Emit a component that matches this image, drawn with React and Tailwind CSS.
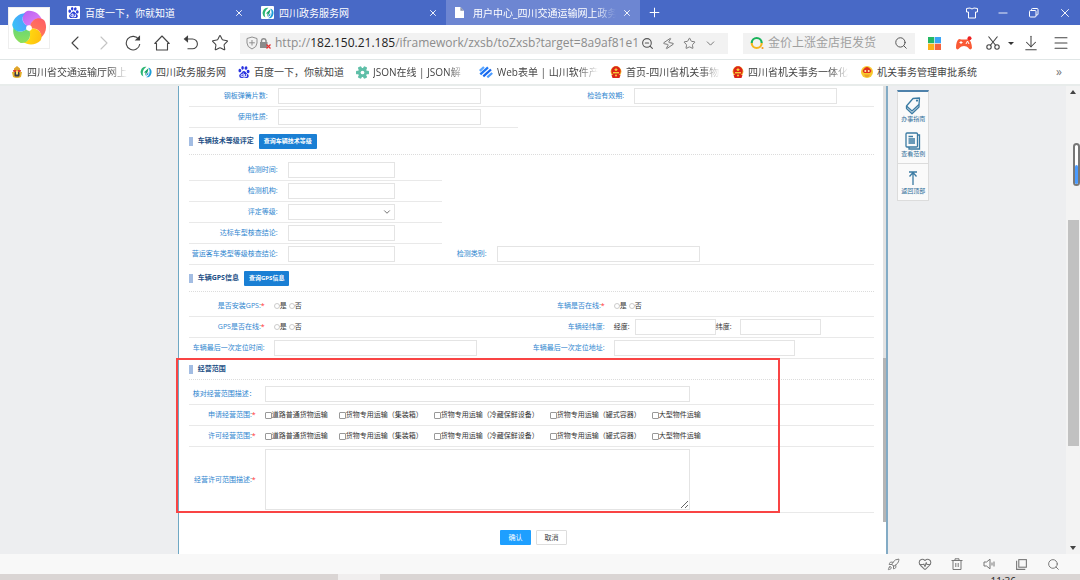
import React from "react";
import {
  ChevronLeft, ChevronRight, ChevronDown, Star, Search, ZoomOut, Zap, Menu,
  ArrowDownToLine, X, Plus, Minus, Rocket, HeartPulse,
} from "lucide-react";
import { SiBaidu } from "react-icons/si";

/* ---------- drawings ---------- */

function PinwheelLogo() {
  const petals = [
    ["#b455f2", "#e07df5", 0],
    ["#ff4f5e", "#ff7a4a", 72],
    ["#ffb400", "#ffe600", 144],
    ["#8fe04a", "#4ed07a", 216],
    ["#28c4f5", "#4a8bff", 288],
  ];
  return (
    <svg viewBox="-18 -18 36 36" className="size-9" aria-hidden="true">
      <defs>
        {petals.map(([a, b], i) => (
          <linearGradient key={i} id={"petal" + i} x1="0" y1="0" x2="1" y2="1">
            <stop offset="0" stopColor={a} />
            <stop offset="1" stopColor={b} />
          </linearGradient>
        ))}
      </defs>
      {petals.map(([, , r], i) => (
        <path
          key={i}
          d="M-2 -2 C-8 -6 -8 -14 -2 -17 C5 -18 11 -14 13 -8 C9 -11 3 -9 1.500 -2.500 Z"
          fill={"url(#petal" + i + ")"}
          opacity="0.94"
          transform={"rotate(" + r + ")"}
        />
      ))}
      <circle r="2.800" fill="#fff" />
    </svg>
  );
}

function GovLogo({ className }) {
  return (
    <svg viewBox="0 0 12 12" className={className} aria-hidden="true">
      <path d="M6.500 .800 A5.200 5.200 0 0 0 3.500 10.600 C2 7.500 2.600 3.500 6.500 .800Z" fill="#2bb673" />
      <path d="M8.500 1.400 A5.200 5.200 0 0 1 6 11.300 C10 9.500 10.400 4.500 8.500 1.400Z" fill="#1c9dd8" />
      <path d="M3.800 6.500 L8.600 2 L7.600 6 L5 9.500 L5.600 6.500 Z" fill="#1aa36a" />
      <path d="M5.500 10 L8.300 6 L8.300 8.500Z" fill="#2a7fd0" />
    </svg>
  );
}

function TransportBadge({ className }) {
  return (
    <svg viewBox="0 0 12 12" className={className} aria-hidden="true">
      <path d="M6 0 L9 2.500 L9 4 L3 4 L3 2.500Z" fill="#e0a52a" />
      <path d="M2 4 H10 L9.500 6 H2.500Z" fill="#d8402a" />
      <path d="M1 6 H11 L10 11 Q6 13 2 11Z" fill="#e3b02c" />
      <rect x="3.500" y="6" width="5" height="4.500" rx="1" fill="#3b3a4a" />
      <rect x="5" y="4.500" width="2" height="4" fill="#f7dc6a" />
    </svg>
  );
}

function Emblem({ className }) {
  return (
    <svg viewBox="0 0 12 12" className={className} aria-hidden="true">
      <circle cx="6" cy="5.500" r="5.400" fill="#f2b82e" />
      <circle cx="6" cy="5" r="4.700" fill="#dc2318" />
      <path d="M6 1.500 L6.600 3 H8 L6.900 4 L7.300 5.300 L6 4.500 L4.700 5.300 L5.100 4 L4 3 H5.400Z" fill="#f7d13c" />
      <rect x="3" y="6" width="6" height="1.400" fill="#f5c93a" />
      <path d="M1.500 9 H10.500 L9.500 12 H2.500Z" fill="#dc2318" />
      <circle cx="6" cy="9.500" r="1.100" fill="#f2c03a" />
    </svg>
  );
}

function GoldEmblem({ className }) {
  return (
    <svg viewBox="0 0 12 12" className={className} aria-hidden="true">
      <circle cx="6" cy="6" r="6" fill="#f8c92c" />
      <path d="M1.500 5 Q6 -3 10.500 5 L9 7 H3Z" fill="#e0301e" />
      <circle cx="4.300" cy="5" r="1" fill="#fff1b0" />
      <circle cx="7.700" cy="5" r="1" fill="#fff1b0" />
      <path d="M3 8.500 H9 L7.500 11 H4.500Z" fill="#eda02a" />
    </svg>
  );
}

function JsonGear({ className }) {
  return (
    <svg viewBox="0 0 12 12" className={className} aria-hidden="true">
      <g fill="#5fbfa8">
        <circle cx="6" cy="6" r="4.200" />
        {[0, 60, 120, 180, 240, 300].map((a) => (
          <rect key={a} x="4.300" y="0" width="3.400" height="4" rx=".800" transform={"rotate(" + (a + 30) + " 6 6)"} />
        ))}
      </g>
      <circle cx="6" cy="6" r="1.700" fill="#fff" />
    </svg>
  );
}

function StripesLogo({ className }) {
  return (
    <svg viewBox="0 0 14 12" className={className} aria-hidden="true" fill="none" strokeWidth="2.300">
      <path d="M.800 4.800 L5 1" stroke="#5aa6ff" />
      <path d="M1.300 8.300 L9 1.300" stroke="#1f78f5" />
      <path d="M4.300 10.300 L12 3.500" stroke="#1667ee" />
      <path d="M8.300 11.300 L13.200 7" stroke="#4a9bff" />
    </svg>
  );
}

function PageIcon() {
  return (
    <svg viewBox="0 0 10 12" className="h-[11px] w-[9px]" aria-hidden="true">
      <path d="M0 0 H6 L10 4 V12 H0Z" fill="#fff" />
      <path d="M6 0 V4 H10Z" fill="#8a93ad" />
    </svg>
  );
}

function ReloadIcon() {
  return (
    <svg viewBox="0 0 16 16" className="size-4" fill="none" stroke="#444" strokeWidth="1.100" aria-hidden="true">
      <path d="M13.800 4.500 A6.800 6.800 0 1 0 14.800 9" />
      <path d="M11 5 H14.500 V1.500Z" fill="#333" />
    </svg>
  );
}

function HomeIcon() {
  return (
    <svg viewBox="0 0 16 16" className="size-4" fill="none" stroke="#444" strokeWidth="1.100" strokeLinejoin="round" aria-hidden="true">
      <path d="M.800 8.500 L8 1 L15.200 8.500 H13.500 V15 H2.500 V8.500 Z" />
    </svg>
  );
}

function UndoIcon() {
  return (
    <svg viewBox="0 0 16 16" className="size-4" fill="none" stroke="#444" strokeWidth="1.100" aria-hidden="true">
      <path d="M2 4 H9.500 A4.900 4.900 0 0 1 9.500 13.800 H4.500" />
      <path d="M4.500 1.500 L1.500 4 L4.500 6.500Z" fill="#333" />
    </svg>
  );
}

function ScissorsIcon() {
  return (
    <svg viewBox="0 0 14 14" className="size-[14px]" fill="none" stroke="#444" strokeWidth="1.100" aria-hidden="true">
      <path d="M2.500 .500 L9.800 9.500 M11.500 .500 L4.200 9.500" />
      <circle cx="3" cy="11" r="2.200" />
      <circle cx="11" cy="11" r="2.200" />
    </svg>
  );
}

function ShirtIcon() {
  return (
    <svg viewBox="0 0 12 12" className="size-3" fill="none" stroke="#fff" strokeLinejoin="round" aria-hidden="true">
      <path d="M4 1 Q6 3 8 1 L11.500 1.500 V5 H9.500 V11 H2.500 V5 H.500 V1.500Z" />
    </svg>
  );
}

function ShieldLock() {
  return (
    <svg viewBox="0 0 26 14" className="h-[14px] w-[26px] shrink-0" fill="none" aria-hidden="true">
      <path d="M6 1 L11 2.500 V7 Q11 11 6 13 Q1 11 1 7 V2.500Z" stroke="#8f8f8f" />
      <path d="M6 4 V9.500 M3.200 6.800 H8.800" stroke="#8f8f8f" />
      <rect x="14" y="6" width="7.500" height="6" fill="#8a8a8a" />
      <path d="M15.500 6 V4.500 A2.300 2.300 0 0 1 20 4.500 V6" stroke="#8a8a8a" strokeWidth="1.400" />
      <path d="M20.500 8.500 L24.500 12.500 M24.500 8.500 L20.500 12.500" stroke="#e83030" strokeWidth="1.200" />
    </svg>
  );
}

function SearchEngineLogo() {
  return (
    <svg viewBox="0 0 14 14" className="size-[14px] shrink-0" fill="none" strokeWidth="2.200" aria-hidden="true">
      <path d="M1.700 7 A5 5 0 0 1 11.700 7" stroke="#19b35a" />
      <path d="M11.700 7 A5 5 0 0 1 1.700 7" stroke="#f5b61e" />
      <circle cx="12.500" cy="12" r="1.100" fill="#f59a1e" />
    </svg>
  );
}

function AppsIcon() {
  return (
    <svg viewBox="0 0 13 13" className="size-[13px]" aria-hidden="true">
      <rect width="6.200" height="6.200" fill="#25b864" />
      <rect x="6.800" width="6.200" height="6.200" fill="#3aa5f5" />
      <rect y="6.800" width="6.200" height="6.200" fill="#fbb117" />
      <rect x="6.800" y="6.800" width="6.200" height="6.200" fill="#f5633c" />
    </svg>
  );
}

function GamepadIcon() {
  return (
    <svg viewBox="0 0 18 15" className="h-[15px] w-[18px]" aria-hidden="true">
      <path d="M4 3 Q9 4 13.500 3 Q16.500 5 17 12 Q15.500 15 13 11.500 Q12 10 9 10 Q6 10 5 11.500 Q2 15 1 12 Q1 5 4 3Z" fill="#fa5a35" />
      <path d="M6 5 V8 M4.500 6.500 H7.500" stroke="#fff" />
      <path d="M11 8 L12.500 5 L14 8" stroke="#fff" fill="none" />
      <circle cx="14.500" cy="2.200" r="2" fill="#ee2222" />
    </svg>
  );
}

function WindowsIcon({ className }) {
  return (
    <svg viewBox="0 0 12 12" className={className} fill="none" stroke="currentColor" aria-hidden="true">
      <rect x="3.500" y="1.500" width="7" height="7" />
      <path d="M1.500 2.500 V10.500 H9.500" />
    </svg>
  );
}

function TrashIcon() {
  return (
    <svg viewBox="0 0 12 13" className="h-[13px] w-3" fill="none" stroke="currentColor" aria-hidden="true">
      <path d="M.500 2.500 H11.500 M4 2.500 V.800 H8 V2.500 M2 2.500 V11.500 H10 V2.500 M4.800 5 V9 M7.200 5 V9" />
    </svg>
  );
}

function SpeakerIcon() {
  return (
    <svg viewBox="0 0 12 12" className="size-3" fill="none" stroke="currentColor" strokeLinejoin="round" aria-hidden="true">
      <path d="M1 4 H3.500 L7 1.200 V10.800 L3.500 8 H1Z M9 4.500 V7.500 M11 3.500 V8.500" />
    </svg>
  );
}

function RestoreIcon() {
  return (
    <svg viewBox="0 0 10 10" className="size-[10px]" fill="none" stroke="#fff" aria-hidden="true">
      <rect x=".500" y="2.500" width="6.500" height="6.500" rx="1" />
      <path d="M2.500 2.500 V1.500 Q2.500 .500 3.500 .500 H8 Q9 .500 9 1.500 V6 Q9 7 8 7 H7" />
    </svg>
  );
}

function GuideIcon() {
  return (
    <svg viewBox="0 0 16 18" className="h-[18px] w-4" fill="none" stroke="#3b7ba3" strokeWidth="1.300" strokeLinejoin="round" aria-hidden="true">
      <path d="M8 1.500 L14.500 1 L14 7.500 L7 14 L1.500 9 Z" />
      <path d="M1.500 9 V11.500 L7 16.800 L14 10 V7.500" />
      <circle cx="12" cy="3.600" r=".500" />
    </svg>
  );
}

function SampleIcon() {
  return (
    <svg viewBox="0 0 16 18" className="h-[18px] w-4" fill="none" stroke="#3b7ba3" strokeWidth="1.300" aria-hidden="true">
      <rect x="1" y="1" width="11.500" height="14" rx="1" />
      <path d="M3.500 4.500 H8 M3.500 7 H10 M3.500 9 H10 M3.500 11 H10 M12.500 3 H14.500 V17 H4 V15" />
    </svg>
  );
}

function TopIcon() {
  return (
    <svg viewBox="0 0 16 18" className="h-[18px] w-4" fill="none" stroke="#3b7ba3" strokeWidth="1.300" aria-hidden="true">
      <path d="M4 3 H12 M8 3.500 V16 M4.500 7.500 L8 3.500 L11.500 7.500" />
    </svg>
  );
}

/* ---------- browser chrome ---------- */

function Tab({ icon, title, active }) {
  return (
    <div className={"flex w-[194px] items-center pl-[9px] pr-2 " + (active ? "bg-[#6d86d2]" : "")}>
      <span className="flex w-[18px] shrink-0">{icon}</span>
      <span className="min-w-0 flex-1 overflow-hidden whitespace-nowrap text-[10px] leading-4 text-white">
        <span className={"block overflow-hidden " + (active ? "[mask-image:linear-gradient(to_right,#000_85%,transparent)]" : "")}>{title}</span>
      </span>
      <button type="button" aria-label="关闭标签页" className="flex w-4 justify-end text-white">
        <X className="size-[10px]" strokeWidth={2.2} />
      </button>
    </div>
  );
}

function TitleBar() {
  return (
    <header className="flex h-[25px] shrink-0 bg-[#4869c6] pl-[58px]">
      <Tab
        icon={<span className="flex size-[13px] items-center justify-center rounded-[1px] bg-white"><SiBaidu className="size-[11px] text-[#2a3fd8]" /></span>}
        title="百度一下，你就知道"
      />
      <Tab
        icon={<span className="flex size-[13px] items-center justify-center rounded-[1px] bg-white"><GovLogo className="size-3" /></span>}
        title="四川政务服务网"
      />
      <Tab active icon={<PageIcon />} title="用户中心_四川交通运输网上政务" />
      <button type="button" aria-label="新标签页" className="flex w-[28px] items-center justify-center text-white">
        <Plus className="size-[15px]" strokeWidth={1.6} />
      </button>
      <div className="ml-auto flex text-white">
        <button type="button" aria-label="皮肤" className="flex w-[31px] items-center justify-center"><ShirtIcon /></button>
        <button type="button" aria-label="最小化" className="flex w-[31px] items-center justify-center"><Minus className="size-[14px]" strokeWidth={1.5} /></button>
        <button type="button" aria-label="还原" className="flex w-[31px] items-center justify-center"><RestoreIcon /></button>
        <button type="button" aria-label="关闭" className="flex w-[31px] items-center justify-center"><X className="size-[14px]" strokeWidth={1.6} /></button>
      </div>
    </header>
  );
}

function NavButton({ label, children }) {
  return (
    <button type="button" aria-label={label} className="flex w-[29px] items-center justify-center text-[#444]">
      {children}
    </button>
  );
}

function Toolbar() {
  return (
    <div className="flex h-[35px] shrink-0 items-center border-b border-[#e0e6e6] bg-white pl-[60px] pr-[6px] pt-[2px]">
      <NavButton label="后退"><ChevronLeft className="size-6" strokeWidth={1.1} /></NavButton>
      <NavButton label="前进"><ChevronRight className="size-6 text-[#c4c4c4]" strokeWidth={1.1} /></NavButton>
      <NavButton label="刷新"><ReloadIcon /></NavButton>
      <NavButton label="主页"><HomeIcon /></NavButton>
      <NavButton label="恢复"><UndoIcon /></NavButton>
      <NavButton label="收藏"><Star className="size-[18px]" strokeWidth={1.4} /></NavButton>
      <div className="ml-[6px] flex h-[21px] min-w-0 flex-1 items-center bg-[#f2f2f2] pl-[6px] pr-[11px]">
        <ShieldLock />
        <p className="ml-[3px] min-w-0 flex-1 overflow-hidden whitespace-nowrap text-[12px] leading-5 text-[#8c8c8c]">
          http://<span className="text-[#222]">182.150.21.185</span>/iframework/zxsb/toZxsb?target=8a9af81e1
        </p>
        <div className="flex shrink-0 items-center gap-2 text-[#777]">
          <ZoomOut className="size-[13px] text-[#555]" strokeWidth={2} />
          <Zap className="size-[13px] rotate-12" strokeWidth={1.7} />
          <Star className="size-[13px]" strokeWidth={1.8} />
          <ChevronDown className="size-[13px]" strokeWidth={1.8} />
        </div>
      </div>
      <div className="ml-[15px] flex h-[21px] w-[172px] items-center bg-[#f2f2f2] px-[7px]">
        <SearchEngineLogo />
        <input aria-label="搜索" placeholder="金价上涨金店拒发货" className="ml-1 min-w-0 flex-1 bg-transparent text-[12px] leading-5 outline-none placeholder:text-[#a0a0a0]" />
        <button type="button" aria-label="搜索按钮"><Search className="size-[14px] text-[#555]" strokeWidth={1.7} /></button>
      </div>
      <div className="ml-1 flex items-center text-[#444]">
        <button type="button" aria-label="应用" className="flex w-[30px] justify-center"><AppsIcon /></button>
        <button type="button" aria-label="游戏" className="flex w-[30px] justify-center"><GamepadIcon /></button>
        <button type="button" aria-label="截图" className="flex w-[28px] justify-center"><ScissorsIcon /></button>
        <button type="button" aria-label="截图选项" className="flex w-2 justify-center">
          <span className="border-x-[3px] border-t-[3px] border-x-transparent border-t-[#333]" />
        </button>
        <button type="button" aria-label="下载" className="flex w-[32px] justify-center"><ArrowDownToLine className="size-[18px]" strokeWidth={1.4} /></button>
        <button type="button" aria-label="菜单" className="flex w-[27px] justify-center"><Menu className="size-[18px]" strokeWidth={1.4} /></button>
      </div>
    </div>
  );
}

const FADE = "[mask-image:linear-gradient(to_right,#000_80%,transparent)] ";
const bookmarks = [
  { text: "四川省交通运输厅网上", icon: <TransportBadge className="size-3" />, cls: FADE + "w-[101px]" },
  { text: "四川政务服务网", icon: <GovLogo className="size-3" />, cls: "" },
  { text: "百度一下，你就知道", icon: <SiBaidu className="size-3 text-[#2a34e0]" />, cls: "" },
  { text: "JSON在线 | JSON解", icon: <JsonGear className="size-[13px]" />, cls: FADE + "w-[94px]" },
  { text: "Web表单 | 山川软件产", icon: <StripesLogo className="h-3 w-[14px]" />, cls: FADE + "w-[101px]" },
  { text: "首页-四川省机关事物", icon: <Emblem className="size-3" />, cls: FADE + "w-[94px]" },
  { text: "四川省机关事务一体化", icon: <Emblem className="size-3" />, cls: FADE + "w-[101px]" },
  { text: "机关事务管理审批系统", icon: <GoldEmblem className="size-3" />, cls: "" },
];

function BookmarkBar() {
  return (
    <nav className="flex h-[26px] shrink-0 items-center gap-3 border-b-2 border-[#e8eceb] bg-white pl-[11px] pr-[18px]">
      {bookmarks.map((b) => (
        <a key={b.text} href="#" className="flex shrink-0 items-center gap-1 text-[10px] leading-4 text-[#444]">
          {b.icon}
          <span className={"overflow-hidden whitespace-nowrap " + b.cls}>{b.text}</span>
        </a>
      ))}
      <button type="button" aria-label="更多书签" className="ml-auto text-[12px] leading-4 text-[#777]">»</button>
    </nav>
  );
}

/* ---------- form ---------- */

const BOX = "h-4 border border-[#e4e4e4] bg-white px-1 text-[7px] outline-none ";

function Label({ htmlFor, className, required, children }) {
  return (
    <label htmlFor={htmlFor} className={"shrink-0 whitespace-nowrap text-right text-[#2f86cf] " + className}>
      {children}
      {required && <span className="text-[#f33]">*</span>}
    </label>
  );
}

function Row({ className = "", children }) {
  return <div className={"flex h-[21px] items-center border-b border-[#e9e9e9] " + className}>{children}</div>;
}

function SectionHead({ title, button, className }) {
  return (
    <div className={"flex items-center border-b border-dotted border-[#dcdcdc] " + className}>
      <span className="mr-[5px] h-[9px] w-1 bg-[#a3bde3]" />
      <h2 className="font-bold text-[#1d4f86]">{title}</h2>
      {button && (
        <button type="button" className="ml-[5px] h-[15px] rounded-[1px] bg-[#1a7fd4] px-[5px] text-[6px] font-bold leading-[15px] text-white">
          {button}
        </button>
      )}
    </div>
  );
}

function YesNo({ name }) {
  return (
    <div className="flex items-center gap-[2px] text-[#333]">
      {["是", "否"].map((t) => (
        <label key={t} className="flex items-center">
          <input type="radio" name={name} className="size-[6px] appearance-none rounded-full border border-[#ccc] bg-white" />
          {t}
        </label>
      ))}
    </div>
  );
}

const scopes = ["道路普通货物运输", "货物专用运输（集装箱）", "货物专用运输（冷藏保鲜设备）", "货物专用运输（罐式容器）", "大型物件运输"];

function ScopeRow({ title }) {
  return (
    <Row className="gap-[9px]">
      <span className="w-[67px] shrink-0 whitespace-nowrap text-right text-[#2f86cf]">{title}:<span className="text-[#f33]">*</span></span>
      <div className="flex gap-[11px] text-[#333]">
        {scopes.map((s) => (
          <label key={s} className="flex items-center whitespace-nowrap">
            <input type="checkbox" className="size-[7px] appearance-none rounded-[1px] border border-[#999] bg-white" />
            {s}
          </label>
        ))}
      </div>
    </Row>
  );
}

function VehicleForm() {
  return (
    <form className="min-w-0 flex-1 bg-white pl-[10px] pr-[9px] text-[7px] leading-[10px]" onSubmit={(e) => e.preventDefault()}>
      <Row>
        <div className="flex w-[52%] items-center gap-[10px]">
          <Label htmlFor="leaf" className="w-[79px]">钢板弹簧片数:</Label>
          <input id="leaf" className={BOX + "w-[203px]"} />
        </div>
        <div className="flex items-center gap-[10px]">
          <Label htmlFor="valid" className="w-[79px]">检验有效期:</Label>
          <input id="valid" className={BOX + "w-[203px]"} />
        </div>
      </Row>
      <Row className="w-[48%] gap-[10px]">
        <Label htmlFor="usage" className="w-[79px]">使用性质:</Label>
        <input id="usage" className={BOX + "w-[203px]"} />
      </Row>

      <SectionHead title="车辆技术等级评定" button="查询车辆技术等级" className="mb-[5px] h-[27px]" />
      <Row className="w-[37%] gap-[10px]">
        <Label htmlFor="ctime" className="w-[89px]">检测时间:</Label>
        <input id="ctime" className={BOX + "w-[107px]"} />
      </Row>
      <Row className="w-[37%] gap-[10px]">
        <Label htmlFor="corg" className="w-[89px]">检测机构:</Label>
        <input id="corg" className={BOX + "w-[107px]"} />
      </Row>
      <Row className="w-[37%] gap-[10px]">
        <Label htmlFor="grade" className="w-[89px]">评定等级:</Label>
        <div className="grid w-[107px] items-center">
          <select id="grade" className={BOX + "col-start-1 row-start-1 w-full appearance-none"}><option value=""></option></select>
          <ChevronDown className="pointer-events-none col-start-1 row-start-1 mr-[3px] size-[10px] justify-self-end text-[#555]" />
        </div>
      </Row>
      <Row className="w-[37%] gap-[10px]">
        <Label htmlFor="std" className="w-[89px]">达标车型核查结论:</Label>
        <input id="std" className={BOX + "w-[107px]"} />
      </Row>
      <Row>
        <div className="flex w-[209px] items-center gap-[10px]">
          <Label htmlFor="bus" className="w-[89px]">营运客车类型等级核查结论:</Label>
          <input id="bus" className={BOX + "w-[107px]"} />
        </div>
        <div className="flex items-center gap-[10px]">
          <Label htmlFor="ctype" className="w-[89px]">检测类别:</Label>
          <input id="ctype" className={BOX + "w-[203px]"} />
        </div>
      </Row>

      <SectionHead title="车辆GPS信息" button="查询GPS信息" className="mb-1 h-[27px]" />
      <Row>
        <div className="flex w-[340px] items-center gap-[9px]">
          <span className="w-[76px] text-right text-[#2f86cf]">是否安装GPS:<span className="text-[#f33]">*</span></span>
          <YesNo name="gps" />
        </div>
        <div className="flex items-center gap-[9px]">
          <span className="w-[76px] text-right text-[#2f86cf]">车辆是否在线:<span className="text-[#f33]">*</span></span>
          <YesNo name="online" />
        </div>
      </Row>
      <Row>
        <div className="flex w-[340px] items-center gap-[9px]">
          <span className="w-[76px] text-right text-[#2f86cf]">GPS是否在线:<span className="text-[#f33]">*</span></span>
          <YesNo name="gpsonline" />
        </div>
        <div className="flex items-center gap-[9px]">
          <span className="w-[76px] text-right text-[#2f86cf]">车辆经纬度:</span>
          <div className="flex items-center text-[#333]">
            <label htmlFor="lng" className="w-[21px]">经度:</label>
            <input id="lng" className={BOX + "w-[81px]"} />
            <label htmlFor="lat" className="w-[24px]">纬度:</label>
            <input id="lat" className={BOX + "w-[81px]"} />
          </div>
        </div>
      </Row>
      <Row>
        <div className="flex w-[340px] items-center gap-[9px]">
          <Label htmlFor="ltime" className="w-[76px]">车辆最后一次定位时间:</Label>
          <input id="ltime" className={BOX + "w-[203px]"} />
        </div>
        <div className="flex items-center gap-[9px]">
          <Label htmlFor="laddr" className="w-[76px]">车辆最后一次定位地址:</Label>
          <input id="laddr" className={BOX + "w-[181px]"} />
        </div>
      </Row>

      <section className="relative">
        <SectionHead title="经营范围" className="mb-1 h-[21px]" />
        <Row className="gap-[9px]">
          <Label htmlFor="check" className="w-[67px]">核对经营范围描述：</Label>
          <input id="check" className={BOX + "w-[425px]"} />
        </Row>
        <ScopeRow title="申请经营范围" />
        <ScopeRow title="许可经营范围" />
        <div className="flex items-center gap-[9px] border-b border-[#e9e9e9] py-[2px]">
          <Label htmlFor="desc" required className="w-[67px]">经营许可范围描述:</Label>
          <textarea id="desc" className="h-[61px] w-[425px] resize border border-[#e4e4e4] bg-white outline-none" />
        </div>
        <div className="pointer-events-none absolute -left-[13px] -top-px bottom-0 w-[604px] border-2 border-[#f94444]" />
      </section>

      <div className="flex justify-center gap-[5px] py-[17px] pl-1">
        <button type="submit" className="h-[15px] w-[31px] rounded-[1px] bg-[#1e9fff] text-white">确认</button>
        <button type="button" className="h-[15px] w-[31px] rounded-[1px] border border-[#ddd] bg-white text-[#444]">取消</button>
      </div>
    </form>
  );
}

function SideTools() {
  const cls = "flex h-9 flex-col items-center justify-center text-[6px] leading-[9px] text-[#2f6d98]";
  return (
    <aside className="ml-[9px] mt-1 w-8 self-start border-x border-b border-t-2 border-[#dcdcdc] border-t-[#4f82ab] bg-[#fafafa]">
      <a href="#" className={cls}><GuideIcon /><span className="whitespace-nowrap">办事指南</span></a>
      <a href="#" className={cls + " border-b border-[#dcdcdc]"}><SampleIcon /><span className="whitespace-nowrap">查看范例</span></a>
      <a href="#" className={cls}><TopIcon /><span className="whitespace-nowrap">返回顶部</span></a>
    </aside>
  );
}

function PageScrollbar() {
  return (
    <div className="relative flex w-[14px] shrink-0 flex-col items-center bg-[#f3f3f3] py-1">
      <span className="border-x-[3px] border-b-[4px] border-x-transparent border-b-[#444]" />
      <span className="flex-[125]" />
      <span className="w-[11px] flex-[225] bg-[#c1c1c1]" />
      <span className="flex-[100]" />
      <span className="border-x-[3px] border-t-[4px] border-x-transparent border-t-[#444]" />
      <div className="absolute right-0 top-[57px] flex h-[43px] w-[7px] items-end rounded-full border-2 border-[#777] bg-white">
        <span className="h-1/2 w-full rounded-full bg-[#4a9bff]" />
      </div>
    </div>
  );
}

function StatusBar() {
  const icons = [
    ["加速", <Rocket className="size-[13px]" strokeWidth={1.8} />],
    ["医生", <HeartPulse className="size-[14px]" strokeWidth={1.8} />],
    ["清理", <TrashIcon />],
    ["静音", <SpeakerIcon />],
    ["分屏", <WindowsIcon className="size-[13px]" />],
    ["缩放", <Search className="size-[13px]" strokeWidth={1.8} />],
  ];
  return (
    <div className="flex h-5 shrink-0 items-center justify-end bg-[#f8f8f8] pr-[11px] text-[#777]">
      {icons.map(([label, icon]) => (
        <button key={label} type="button" aria-label={label} className="flex w-8 justify-center">{icon}</button>
      ))}
    </div>
  );
}

export default function App() {
  return (
    <div className="relative flex h-screen flex-col overflow-hidden bg-[#edeef0] font-['Open_Sans','Noto_Sans_CJK_SC',sans-serif]">
      <TitleBar />
      <Toolbar />
      <BookmarkBar />
      <div className="absolute left-2 top-[7px] flex size-[42px] items-center justify-center border border-[#eee] bg-white">
        <PinwheelLogo />
      </div>
      <main className="flex min-h-0 flex-1">
        <div className="grid min-w-0 flex-1 grid-cols-[1fr_4fr_1fr] overflow-hidden">
          <div />
          <div className="flex min-h-0 border-l border-r-2 border-l-[#6fa8c4] border-r-[#83abc5] bg-white">
            <VehicleForm />
            <div className="flex w-[3px] flex-col bg-[#e2e2e2]">
              <span className="flex-[272]" />
              <span className="flex-[164] bg-[#b5b5b5]" />
              <span className="flex-[32] bg-white" />
            </div>
          </div>
          <SideTools />
        </div>
        <PageScrollbar />
      </main>
      <StatusBar />
      <footer className="flex h-[6px] shrink-0 overflow-hidden bg-[#dad5d4]">
        <span className="ml-[338px] w-[42px] bg-[#f0eeee]" />
        <time className="ml-auto mr-[64px] pt-[1px] text-[10px] leading-[12px] text-[#222]">11:36</time>
      </footer>
    </div>
  );
}
